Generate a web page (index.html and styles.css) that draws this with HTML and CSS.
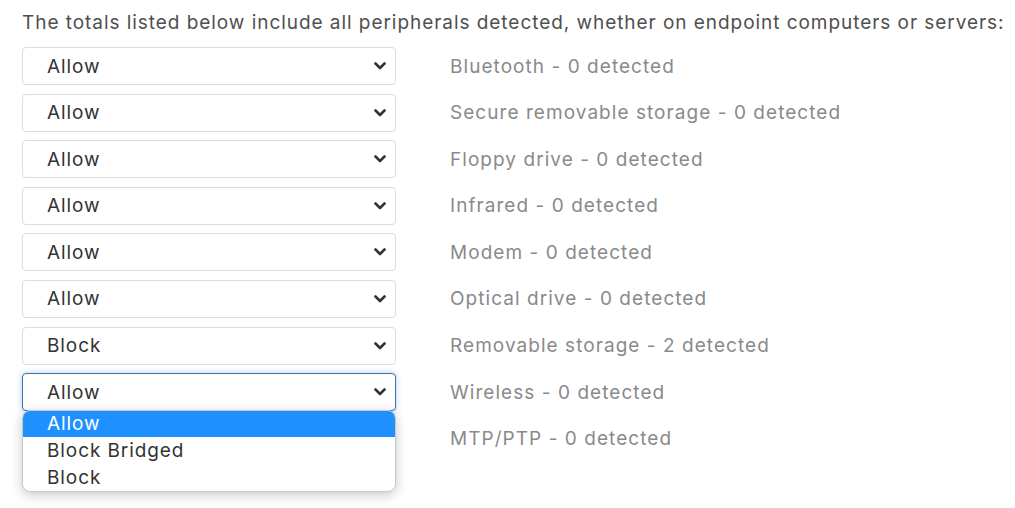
FILE: index.html
```html
<!DOCTYPE html>
<html lang="en">
<head>
  <meta charset="UTF-8">
  <title>Peripheral control</title>
  <link rel="stylesheet" href="styles.css">
</head>
<body>
  <p class="intro">The totals listed below include all peripherals detected, whether on endpoint computers or servers:</p>

  <div class="rules">
    <div class="row">
      <div class="select"><span>Allow</span><svg class="chev" viewBox="0 0 12 8"><path d="M1.5 1.5 6 6l4.5-4.5"/></svg></div>
      <div class="label">Bluetooth - 0 detected</div>
    </div>
    <div class="row">
      <div class="select"><span>Allow</span><svg class="chev" viewBox="0 0 12 8"><path d="M1.5 1.5 6 6l4.5-4.5"/></svg></div>
      <div class="label">Secure removable storage - 0 detected</div>
    </div>
    <div class="row">
      <div class="select"><span>Allow</span><svg class="chev" viewBox="0 0 12 8"><path d="M1.5 1.5 6 6l4.5-4.5"/></svg></div>
      <div class="label">Floppy drive - 0 detected</div>
    </div>
    <div class="row">
      <div class="select"><span>Allow</span><svg class="chev" viewBox="0 0 12 8"><path d="M1.5 1.5 6 6l4.5-4.5"/></svg></div>
      <div class="label">Infrared - 0 detected</div>
    </div>
    <div class="row">
      <div class="select"><span>Allow</span><svg class="chev" viewBox="0 0 12 8"><path d="M1.5 1.5 6 6l4.5-4.5"/></svg></div>
      <div class="label">Modem - 0 detected</div>
    </div>
    <div class="row">
      <div class="select"><span>Allow</span><svg class="chev" viewBox="0 0 12 8"><path d="M1.5 1.5 6 6l4.5-4.5"/></svg></div>
      <div class="label">Optical drive - 0 detected</div>
    </div>
    <div class="row">
      <div class="select"><span>Block</span><svg class="chev" viewBox="0 0 12 8"><path d="M1.5 1.5 6 6l4.5-4.5"/></svg></div>
      <div class="label">Removable storage - 2 detected</div>
    </div>
    <div class="row">
      <div class="select open">
        <span>Allow</span><svg class="chev" viewBox="0 0 12 8"><path d="M1.5 1.5 6 6l4.5-4.5"/></svg>
        <!-- opened option list -->
        <ul class="options">
          <li class="active">Allow</li>
          <li>Block Bridged</li>
          <li>Block</li>
        </ul>
      </div>
      <div class="label">Wireless - 0 detected</div>
    </div>
    <div class="row">
      <div class="spacer"></div>
      <div class="label">MTP/PTP - 0 detected</div>
    </div>
  </div>
</body>
</html>
```

FILE: styles.css
```css
html,
body {
  height: 100%;
}

body {
  margin: 0;
  padding: 11px 22px;
  box-sizing: border-box;
  font-family: Inter, "Noto Sans", sans-serif;
  background-color: #ffffff;
}

.intro {
  margin: 0 0 12px;
  font-size: 19px;
  letter-spacing: 0.95px;
  line-height: 24px;
  color: #4f4f4f;
  white-space: nowrap;
}

.rules {
  display: flex;
  flex-direction: column;
  gap: 8.6px;
}

.row {
  display: flex;
  align-items: center;
  gap: 54px;
}

.select,
.spacer {
  width: 374px;
  height: 38px;
  box-sizing: border-box;
  flex-shrink: 0;
}

.select {
  position: relative;
  display: flex;
  align-items: center;
  justify-content: space-between;
  padding: 0 9px 0 24px;
  border: 1px solid #dcdcdc;
  border-radius: 4px;
  font-size: 19px;
  letter-spacing: 0.9px;
  color: #333;
  background-color: #fff;
}

.select.open {
  border-color: #3b6fb6;
  box-shadow: 0 0 6px rgba(59, 111, 182, 0.35);
}

.chev {
  width: 12px;
  height: 8px;
  fill: none;
  stroke: #333;
  stroke-width: 2.6;
  stroke-linecap: round;
  stroke-linejoin: round;
}

.label {
  font-size: 19px;
  letter-spacing: 1.05px;
  color: #8a8a8a;
}

.options {
  position: absolute;
  top: 36px;
  left: -1px;
  width: 374px;
  margin: 0;
  padding: 0;
  list-style: none;
  background-color: #fff;
  border: 1px solid #c9c9c9;
  border-radius: 8px;
  box-shadow: 0 3px 12px rgba(0, 0, 0, 0.22);
  overflow: hidden;
  box-sizing: border-box;
  z-index: 2;
}

.options li {
  height: 27px;
  line-height: 27px;
  padding-left: 24px;
  font-size: 19px;
  letter-spacing: 0.9px;
  color: #333;
}

.options li.active {
  height: 26px;
  line-height: 26px;
  background-color: #1e90ff;
  color: #fff;
}
```
